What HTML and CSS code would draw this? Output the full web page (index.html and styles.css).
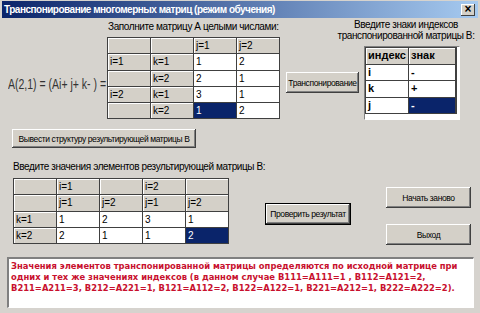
FILE: index.html
```html
<!DOCTYPE html>
<html>
<head>
<meta charset="utf-8">
<link rel="stylesheet" href="styles.css">
</head>
<body>
<div class="win">
  <div class="title">
    <span class="title-text">Транспонирование многомерных матриц (режим обучения)</span>
    <span class="close">×</span>
  </div>
  <div class="row-a">
    <div class="formula"><span class="formula-text">A(2,1) = (Ai+ j+ k- ) =</span></div>
    <div class="mat-a">
      <div class="lbl">Заполните матрицу А целыми числами:</div>
      <div class="grid grid-a">
        <div class="c h"></div><div class="c h"></div><div class="c h">j=1</div><div class="c h">j=2</div>
        <div class="c h">i=1</div><div class="c h">k=1</div><div class="c">1</div><div class="c">2</div>
        <div class="c h"></div><div class="c h">k=2</div><div class="c">2</div><div class="c">1</div>
        <div class="c h">i=2</div><div class="c h">k=1</div><div class="c">3</div><div class="c">1</div>
        <div class="c h"></div><div class="c h">k=2</div><div class="c sel">1</div><div class="c">2</div>
      </div>
    </div>
    <div class="btn btn-t">Транспонирование</div>
    <div class="right">
      <div class="lbl center">Введите знаки индексов<br>транспонированной матрицы В:</div>
      <div class="idx-frame">
        <div class="grid grid-idx">
          <div class="c h b">индекс</div><div class="c h b">знак</div>
          <div class="c b">i</div><div class="c b">-</div>
          <div class="c b">k</div><div class="c b">+</div>
          <div class="c b">j</div><div class="c b sel">-</div>
        </div>
      </div>
    </div>
  </div>
  <div class="btn btn-out">Вывести структуру результирующей матрицы В</div>
  <div class="lbl lbl-b">Введите значения элементов результирующей матрицы В:</div>
  <div class="row-d">
    <div class="grid grid-b">
      <div class="c h"></div><div class="c h">i=1</div><div class="c h"></div><div class="c h">i=2</div><div class="c h"></div>
      <div class="c h"></div><div class="c h">j=1</div><div class="c h">j=2</div><div class="c h">j=1</div><div class="c h">j=2</div>
      <div class="c h">k=1</div><div class="c">1</div><div class="c">2</div><div class="c">3</div><div class="c">1</div>
      <div class="c h">k=2</div><div class="c">2</div><div class="c">1</div><div class="c">1</div><div class="c sel">2</div>
    </div>
    <div class="btn btn-check">Проверить результат</div>
    <div class="btn-col">
      <div class="btn btn-side">Начать заново</div>
      <div class="btn btn-side">Выход</div>
    </div>
  </div>
  <div class="msg">Значения элементов транспонированной матрицы определяются по исходной матрице при одних и тех же значениях индексов (в данном случае В111=А111=1 , В112=А121=2, В211=А211=3, В212=А221=1, В121=А112=2, В122=А122=1, В221=А212=1, В222=А222=2).</div>
</div>
</body>
</html>
```

FILE: styles.css
```css
html, body {
  margin: 0;
  padding: 0;
  background: #d4d0c8;
}
.win {
  width: 480px;
  height: 313px;
  box-sizing: border-box;
  background: #d6d3ce;
  font-family: "Liberation Sans", Arial, sans-serif;
  font-size: 10px;
  color: #000;
  overflow: hidden;
}
.title {
  height: 17px;
  margin: 1px 2px 0 2px;
  background: linear-gradient(to right, #0a246a, #a6caf0);
  display: flex;
  align-items: center;
  justify-content: space-between;
  padding: 0 3px 0 2px;
}
.title-text {
  color: #fff;
  font-weight: bold;
  font-size: 10px;
  letter-spacing: -0.5px;
}
.close {
  width: 14px;
  height: 12px;
  background: #d4d0c8;
  box-shadow: inset -1px -1px #404040, inset 1px 1px #fff;
  font-size: 12px;
  line-height: 11px;
  text-align: center;
  font-weight: bold;
}
.row-a {
  display: flex;
  height: 102px;
}
.formula {
  width: 99px;
  padding-left: 8px;
  margin-top: 57px;
  font-size: 15px;
  line-height: 17px;
  color: #333;
  white-space: nowrap;
}
.formula-text {
  display: inline-block;
  transform: scaleX(0.7);
  transform-origin: left center;
}
.mat-a {
  width: 173px;
  margin-top: 2px;
}
.lbl {
  font-size: 10px;
  letter-spacing: -0.4px;
  line-height: 14px;
  white-space: nowrap;
}
.mat-a .lbl {
  padding-left: 1px;
  height: 17px;
}
.grid {
  display: grid;
  gap: 1px;
  padding: 1px;
  background: #404040;
  box-sizing: border-box;
}
.grid-a {
  grid-template-columns: repeat(4, 42px);
  grid-auto-rows: 15.3px;
}
.c {
  background: #fff;
  font-size: 10px;
  line-height: 13px;
  padding: 1px 2px;
  box-sizing: border-box;
  white-space: nowrap;
  overflow: hidden;
}
.c.h {
  background: #d4d0c8;
  box-shadow: inset 1px 1px #fff;
}
.c.sel {
  background: #0a246a;
  color: #fff;
}
.c.b {
  font-weight: bold;
  font-size: 11px;
}
.btn {
  background: #d4d0c8;
  box-shadow: inset -1px -1px #404040, inset 1px 1px #fff, inset -2px -2px #808080;
  font-size: 8.5px;
  letter-spacing: -0.4px;
  display: flex;
  align-items: center;
  justify-content: center;
  white-space: nowrap;
  box-sizing: border-box;
}
.btn-t {
  width: 73px;
  height: 21px;
  margin-left: 6px;
  margin-top: 54px;
}
.right {
  width: 148px;
  margin-left: -27px;
  margin-top: 1px;
  display: flex;
  flex-direction: column;
  align-items: flex-start;
}
.right .center {
  text-align: center;
  width: 148px;
  line-height: 11px;
}
.idx-frame {
  margin-top: 5px;
  margin-left: 32px;
  width: 96px;
  height: 75px;
  background: #fff;
  box-sizing: border-box;
  border-top: 1px solid #808080;
  border-left: 1px solid #808080;
  border-right: 1px solid #fff;
  border-bottom: 1px solid #fff;
}
.grid-idx {
  width: 92px;
  grid-template-columns: 42px 46px;
  grid-auto-rows: 15.5px;
}
.btn-out {
  width: 184px;
  height: 19px;
  margin-left: 12px;
  margin-top: 9px;
}
.lbl-b {
  margin-left: 13px;
  margin-top: 12px;
}
.row-d {
  display: flex;
  margin-top: 4px;
  height: 68px;
}
.grid-b {
  width: 216px;
  height: 66px;
  margin-left: 13px;
  grid-template-columns: repeat(5, 42px);
  grid-auto-rows: 15.3px;
}
.btn-check {
  width: 86px;
  height: 22px;
  margin-left: 36px;
  margin-top: 25px;
  box-shadow: inset 0 0 0 1px #000, inset -2px -2px #404040, inset 2px 2px #fff, inset -3px -3px #808080;
}
.btn-col {
  margin-left: 35px;
  margin-top: 9px;
  display: flex;
  flex-direction: column;
  gap: 16px;
}
.btn-side {
  width: 85px;
  height: 21px;
}
.msg {
  margin: 11px 6px 0 7px;
  height: 51px;
  background: #fff;
  box-sizing: border-box;
  border-top: 2px solid #808080;
  border-left: 2px solid #808080;
  border-right: 1px solid #fff;
  border-bottom: 1px solid #fff;
  padding: 2px 2px;
  color: #c8102e;
  font-family: "DejaVu Sans", Verdana, sans-serif;
  font-weight: bold;
  font-size: 8.4px;
  line-height: 11px;
}
```
